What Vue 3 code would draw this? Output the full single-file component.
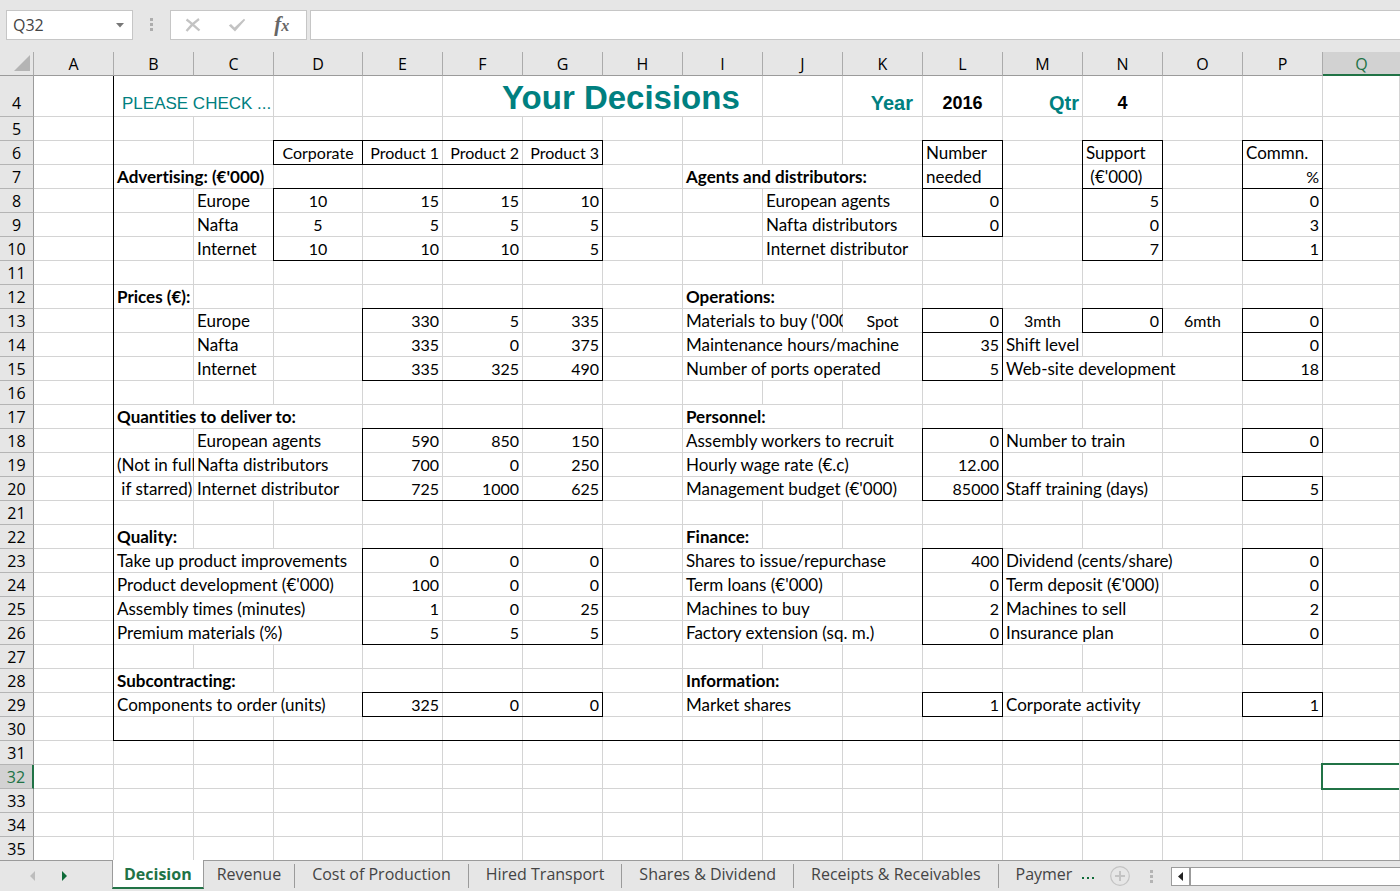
<script setup>
import { ref } from 'vue'

const columns = 'ABCDEFGHIJKLMNOPQ'.split('')
const firstRow = 4
const lastRow = 35
const activeCell = ref('Q32')
const formula = ref('')
const activeTab = ref('Decision')
const tabs = ['Decision', 'Revenue', 'Cost of Production', 'Hired Transport', 'Shares & Dividend', 'Receipts & Receivables', 'Paymer']

// address: [text, column span, extra classes]
const cells = {
  B4: ['PLEASE CHECK ...', 2, 'notice'],
  F4: ['Your Decisions', 4, 'title'],
  K4: ['Year', 1, 'caption year'],
  L4: ['2016', 1, 'period'],
  M4: ['Qtr', 1, 'caption'],
  N4: ['4', 1, 'period'],

  D6: ['Corporate', 1, 'center'], E6: ['Product 1', 1, 'num'], F6: ['Product 2', 1, 'num'], G6: ['Product 3', 1, 'num'],
  L6: ['Number'], N6: ['Support'], P6: ['Commn.'],
  B7: ["Advertising: (€'000)", 2, 'bold'], I7: ['Agents and distributors:', 3, 'bold'],
  L7: ['needed'], N7: [" (€'000)"], P7: ['%', 1, 'num'],
  C8: ['Europe'], C9: ['Nafta'], C10: ['Internet'],
  D8: ['10', 1, 'center'], D9: ['5', 1, 'center'], D10: ['10', 1, 'center'],
  J8: ['European agents', 2], J9: ['Nafta distributors', 2], J10: ['Internet distributor', 2],

  B12: ['Prices (€):', 1, 'bold'], I12: ['Operations:', 2, 'bold'],
  C13: ['Europe'], C14: ['Nafta'], C15: ['Internet'],
  I13: ["Materials to buy ('000)", 2], K13: ['Spot', 1, 'center'], M13: ['3mth', 1, 'center'], O13: ['6mth', 1, 'center'],
  I14: ['Maintenance hours/machine', 3], M14: ['Shift level'],
  I15: ['Number of ports operated', 3], M15: ['Web-site development', 3],

  B17: ['Quantities to deliver to:', 3, 'bold'], I17: ['Personnel:', 2, 'bold'],
  C18: ['European agents', 2], B19: ['(Not in full'], C19: ['Nafta distributors', 2],
  B20: [' if starred)'], C20: ['Internet distributor', 2],
  I18: ['Assembly workers to recruit', 3], M18: ['Number to train', 2],
  I19: ['Hourly wage rate (€.c)', 3],
  I20: ["Management budget (€'000)", 3], M20: ['Staff training (days)', 2],

  B22: ['Quality:', 1, 'bold'], I22: ['Finance:', 1, 'bold'],
  B23: ['Take up product improvements', 3], I23: ['Shares to issue/repurchase', 3], M23: ['Dividend (cents/share)', 3],
  B24: ["Product development (€'000)", 3], I24: ["Term loans (€'000)", 2], M24: ["Term deposit (€'000)", 2],
  B25: ['Assembly times (minutes)', 3], I25: ['Machines to buy', 2], M25: ['Machines to sell', 2],
  B26: ['Premium materials (%)', 3], I26: ['Factory extension (sq. m.)', 3], M26: ['Insurance plan', 2],

  B28: ['Subcontracting:', 2, 'bold'], I28: ['Information:', 2, 'bold'],
  B29: ['Components to order (units)', 3], I29: ['Market shares', 2], M29: ['Corporate activity', 2]
}

// runs of right-aligned figures, read downwards from the first address
const figures = {
  E8: [15, 5, 10], F8: [15, 5, 10], G8: [10, 5, 5],
  L8: [0, 0], N8: [5, 0, 7], P8: [0, 3, 1],
  E13: [330, 335, 335], F13: [5, 0, 325], G13: [335, 375, 490],
  L13: [0, 35, 5], N13: [0], P13: [0, 0, 18],
  E18: [590, 700, 725], F18: [850, 0, 1000], G18: [150, 250, 625],
  L18: [0, '12.00', 85000], P18: [0], P20: [5],
  E23: [0, 100, 1, 5], F23: [0, 0, 0, 5], G23: [0, 0, 25, 5],
  L23: [400, 0, 2, 0], P23: [0, 0, 2, 0],
  E29: [325], F29: [0], G29: [0], L29: [1], P29: [1]
}
for (const [start, values] of Object.entries(figures)) {
  values.forEach((v, i) => { cells[start[0] + (Number(start.slice(1)) + i)] = [String(v), 1, 'num'] })
}

// outlined ranges
const boxes = [
  'D6:D6', 'E6:G6', 'D8:G10', 'L6:L7', 'L8:L9', 'N6:N7', 'N8:N10', 'P6:P7', 'P8:P10',
  'E13:G15', 'L13:L13', 'L14:L15', 'N13:N13', 'P13:P13', 'P14:P15',
  'E18:G20', 'L18:L20', 'P18:P18', 'P20:P20',
  'E23:G26', 'L23:L26', 'P23:P26', 'E29:G29', 'L29:L29', 'P29:P29', 'B4:R30'
].map(range => {
  const [a, b] = range.split(':')
  return { l: a.charCodeAt(0) - 65, t: Number(a.slice(1)), r: b.charCodeAt(0) - 65, b: Number(b.slice(1)) }
})
const darkRight = (c, r) => boxes.some(x => r >= x.t && r <= x.b && (c === x.r || c + 1 === x.l))
const darkBottom = (c, r) => boxes.some(x => c >= x.l && c <= x.r && (r === x.b || (r + 1 === x.t && r >= firstRow)))
const darkCorner = (c, r) => darkRight(c, r) || darkBottom(c, r) || darkRight(c, r + 1) || darkBottom(c + 1, r)

const rows = []
for (let r = firstRow; r <= lastRow; r++) {
  const list = []
  for (let c = 0; c < columns.length;) {
    const id = columns[c] + r
    const [text = '', span = 1, kind = ''] = cells[id] || []
    const end = c + span - 1
    list.push({
      id, text, span,
      classes: [kind, {
        'dark-right': darkRight(end, r),
        'dark-bottom': darkBottom(end, r),
        'dark-corner': darkCorner(end, r),
        selected: id === activeCell.value
      }]
    })
    c += span
  }
  rows.push({ number: r, list })
}
</script>

<template>
  <main class="workbook">
    <header class="formula-bar">
      <div class="name-box">
        <input v-model="activeCell" aria-label="Name box" />
        <button type="button" aria-label="Show names">
          <svg width="8" height="5" viewBox="0 0 8 5"><path d="M0 0h8L4 4.5z" fill="#777" /></svg>
        </button>
      </div>
      <svg class="grip" width="3" height="13" viewBox="0 0 3 13"><path d="M0 0h3v3H0zM0 5h3v3H0zM0 10h3v3H0z" fill="#adadad" /></svg>
      <div class="actions">
        <button type="button" aria-label="Cancel">
          <svg width="16" height="14" viewBox="0 0 16 14"><path d="M1.5 1.5C5 4 10 8.500 14.500 12.500M14 1C9 4.500 5 8.500 1.500 13" fill="none" stroke="#c3c3c3" stroke-width="2.200" /></svg>
        </button>
        <button type="button" aria-label="Enter">
          <svg width="18" height="14" viewBox="0 0 18 14"><path d="M0.800 7.500L3 6L6.500 9.500L16 0.800L17.200 2L7 13.500z" fill="#c3c3c3" /></svg>
        </button>
        <button type="button" class="fx" aria-label="Insert function"><i>f</i><i class="x">x</i></button>
      </div>
      <input v-model="formula" class="formula" aria-label="Formula" />
    </header>

    <section class="grid">
      <table>
        <colgroup>
          <col class="col-head" />
          <col v-for="c in columns" :key="c" :class="{ 'col-d': c === 'D', 'col-last': c === 'Q', 'col-std': c !== 'D' && c !== 'Q' }" />
        </colgroup>
        <thead>
          <tr>
            <th class="corner"><svg width="16" height="16" viewBox="0 0 16 16"><path d="M16 0v16H0z" fill="#b4b4b4" /></svg></th>
            <th v-for="c in columns" :key="c" scope="col" :class="{ current: c === 'Q' }">{{ c }}</th>
          </tr>
        </thead>
        <tbody>
          <tr v-for="row in rows" :key="row.number" :class="{ tall: row.number === 4 }">
            <th scope="row" :class="{ current: row.number === 32 }">{{ row.number }}</th>
            <td v-for="cell in row.list" :key="cell.id" :colspan="cell.span" :class="cell.classes">{{ cell.text }}</td>
          </tr>
        </tbody>
      </table>
    </section>

    <footer class="tab-bar">
      <div class="tab-nav">
        <button type="button" aria-label="Previous sheets"><svg width="5" height="10" viewBox="0 0 5 10"><path d="M5 0v10L0 5z" fill="#bdbdbd" /></svg></button>
        <button type="button" aria-label="Next sheets"><svg width="5" height="10" viewBox="0 0 5 10"><path d="M0 0v10L5 5z" fill="#0e6b38" /></svg></button>
      </div>
      <nav class="tabs">
        <button v-for="t in tabs" :key="t" type="button" class="tab" :class="{ active: t === activeTab }" @click="activeTab = t">{{ t }}</button>
      </nav>
      <button type="button" class="more" aria-label="More sheets">
        <svg width="13" height="2" viewBox="0 0 13 2"><path d="M0 0h2v2H0zM5 0h2v2H5zM10 0h2v2h-2z" fill="#0e6b38" /></svg>
      </button>
      <button type="button" class="add" aria-label="New sheet">
        <svg width="20" height="20" viewBox="0 0 20 20"><circle cx="10" cy="10" r="9.300" fill="none" stroke="#c3c3c3" stroke-width="1.200" /><path d="M10 5v10M5 10h10" stroke="#c3c3c3" stroke-width="2" /></svg>
      </button>
      <svg class="tab-grip" width="3" height="13" viewBox="0 0 3 13"><path d="M0 0h3v3H0zM0 5h3v3H0zM0 10h3v3H0z" fill="#b4b4b4" /></svg>
      <div class="scroll">
        <button type="button" aria-label="Scroll left"><svg width="5" height="9" viewBox="0 0 5 9"><path d="M5 0v9L0 4.500z" fill="#222" /></svg></button>
        <div class="thumb"></div>
      </div>
    </footer>
  </main>
</template>

<style>
html, body { background: #e6e6e6; overflow: hidden; }
</style>

<style scoped>
.workbook {
  display: flex;
  flex-direction: column;
  height: 100vh;
  background: #e6e6e6;
  font-family: Lato, "Liberation Sans", sans-serif;
  font-variant-ligatures: none;
  color: #000;
}
button, input { font: inherit; color: inherit; border: 0; background: none; padding: 0; margin: 0; }
button { display: flex; align-items: center; justify-content: center; }
svg { display: block; }

.formula-bar { display: flex; flex: none; height: 52px; padding: 10px 0 12px 6px; box-sizing: border-box; font-family: "Open Sans", "Noto Sans", sans-serif; }
.name-box, .actions, .formula { box-sizing: border-box; border: 1px solid #c6c6c6; background: #fff; height: 30px; }
.name-box { display: flex; width: 127px; color: #444; font-size: 16px; }
.name-box input { flex: 1; min-width: 0; padding-left: 6px; outline: 0; }
.name-box button { width: 24px; }
.grip { margin: 8px 17px 0; }
.actions { display: flex; width: 137px; margin-right: 3px; padding-right: 2px; }
.actions button { flex: 1; }
.actions .fx { align-items: baseline; font: italic bold 21px/26px "Liberation Serif", serif; color: #666; }
.fx .x { font-size: 16px; }
.formula { flex: 1; min-width: 0; border-right: 0; padding: 0 6px; outline: 0; }

.grid { flex: 1; min-height: 0; overflow: hidden; background: #fff; }
table { width: 100%; table-layout: fixed; border-collapse: separate; border-spacing: 0; font-size: 17px; }
.col-head { width: 34px; }
.col-std { width: 80px; }
.col-d { width: 89px; }
th, td { box-sizing: border-box; height: 24px; white-space: pre; overflow: hidden; }
th { padding: 2px 0 0; line-height: 20px; vertical-align: top; font-family: "Open Sans", "Noto Sans", sans-serif; font-weight: 400; font-size: 16px; background: #e6e6e6; }
thead th { border-bottom: 1px solid #9b9b9b; border-right: 1px solid #ababab; }
thead th.current { background: #d2d2d2; color: #217346; border-bottom: 2px solid #217346; border-right: 0; }
.corner svg { margin: 3px 0 0 14px; }
thead .corner { padding-top: 0; }
tbody th { border-right: 1px solid #9b9b9b; border-bottom: 1px solid #b4b4b4; }
tbody th.current { background: #d2d2d2; color: #217346; border-right: 2px solid #217346; }

/* gridlines are painted as backgrounds so dark outlines meet cleanly at the corners */
td {
  --right: #d4d4d4;
  --bottom: #d4d4d4;
  --corner: #d4d4d4;
  padding: 0 4px 1px 3px;
  line-height: 23px;
  text-align: left;
  background:
    linear-gradient(var(--corner), var(--corner)) right bottom / 1px 1px no-repeat,
    linear-gradient(var(--bottom), var(--bottom)) left bottom / 100% 1px no-repeat,
    linear-gradient(var(--right), var(--right)) right top / 1px 100% no-repeat,
    #fff;
}
td.dark-right { --right: #000; }
td.dark-bottom { --bottom: #000; }
td.dark-corner { --corner: #000; }
.num, .center { font-size: 16px; }
.num { text-align: right; }
.center { text-align: center; }
.bold { font-weight: 700; }
.tall th, .tall td { height: 41px; vertical-align: bottom; line-height: 26px; }
.tall td { font-family: "Liberation Sans", Arial, sans-serif; }
.tall td.notice { font-size: 17px; line-height: 24px; color: #008080; padding-left: 8px; padding-right: 0; }
.tall td.title { font-size: 33px; font-weight: 700; line-height: 36px; color: #008080; padding-left: 59px; }
td.caption { font-size: 20px; font-weight: 700; color: #008080; text-align: right; }
td.year { padding-right: 10px; }
td.period { font-size: 18px; font-weight: 700; text-align: center; }
td.selected { position: relative; overflow: visible; }
td.selected::after { content: ""; position: absolute; inset: -2px 1px -1px -2px; border: 2px solid #217346; border-right: 0; }

.tab-bar { display: flex; flex: none; height: 31px; box-sizing: border-box; border-top: 1px solid #9b9b9b; font-family: "Open Sans", "Noto Sans", sans-serif; font-size: 16px; color: #444; }
.tab-nav { display: flex; width: 112px; box-sizing: border-box; padding-left: 20px; }
.tab-nav button { width: 24px; margin-right: 8px; }
.tabs { display: flex; }
.tab { position: relative; height: 28px; padding: 0 18px 0 17px; line-height: 26px; white-space: nowrap; align-items: flex-start; }
.tab:not(:last-child):not(.active)::after { content: ""; position: absolute; right: 0; top: 3px; bottom: 1px; width: 1px; background: #9b9b9b; }
.tab.active { margin-top: -1px; height: 29px; padding: 1px 11px 0; box-sizing: border-box; background: #fff; color: #217346; font-weight: 700; border-bottom: 2px solid #217346; border-right: 1px solid #9b9b9b; border-left: 1px solid #9b9b9b; }
.tab.active + .tab { padding: 0 14px 0 13px; }
.tab:last-child { padding-right: 0; }
.more { width: 13px; margin: 3px 15px 0 10px; }
.add { width: 20px; }
.tab-grip { margin: 9px 18px 0 20px; }
.scroll { display: flex; flex: 1; height: 19px; margin-top: 6px; box-sizing: border-box; border: 1px solid #9b9b9b; border-right: 0; background: #fff; }
.scroll button { width: 17px; }
.thumb { flex: 1; border-left: 2px solid #9b9b9b; }
</style>
